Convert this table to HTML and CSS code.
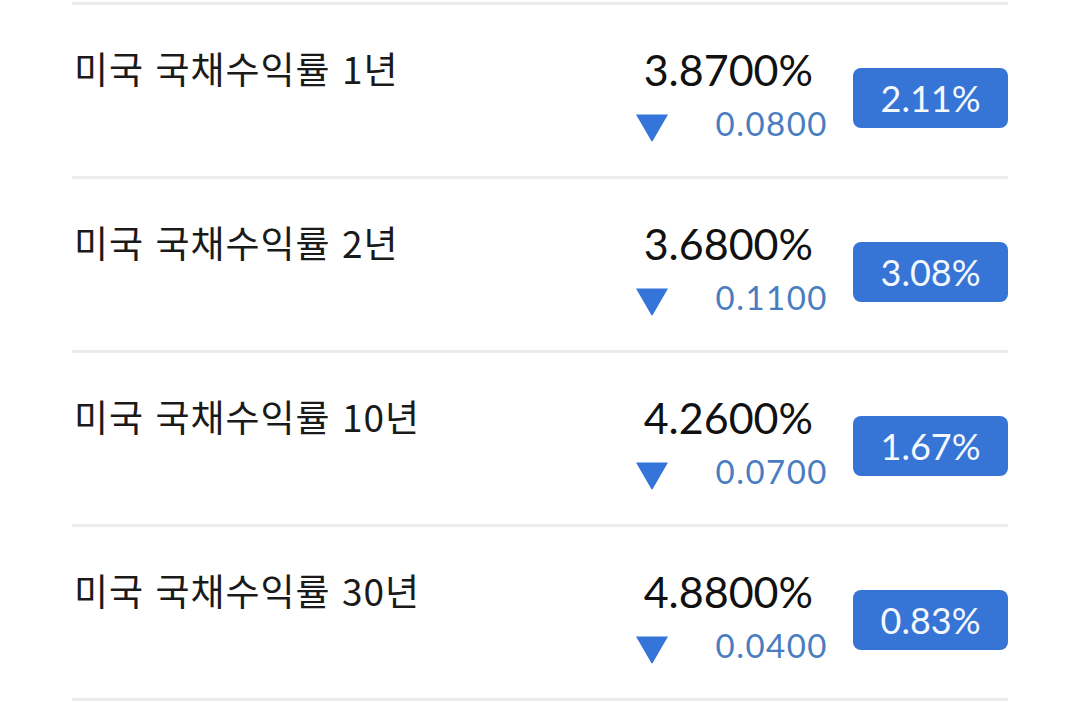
FILE: index.html
```html
<!DOCTYPE html>
<html lang="ko">
<head>
<meta charset="utf-8">
<title>미국 국채수익률</title>
<link rel="stylesheet" href="styles.css">
</head>
<body>
<ul class="list">
  <li class="row">
    <div class="label">미국 국채수익률 1년</div>
    <div class="right">
      <div class="quote">
        <div class="price">3.8700%</div>
        <div class="change">
          <svg class="tri" viewBox="0 0 36 29" width="36" height="29"><path d="M2 1.5 H34 L18.8 27.8 Q18 29 17.2 27.8 Z" fill="#3574d8"/></svg>
          <span class="delta">0.0800</span>
        </div>
      </div>
      <div class="badge">2.11%</div>
    </div>
  </li>
  <li class="row">
    <div class="label">미국 국채수익률 2년</div>
    <div class="right">
      <div class="quote">
        <div class="price">3.6800%</div>
        <div class="change">
          <svg class="tri" viewBox="0 0 36 29" width="36" height="29"><path d="M2 1.5 H34 L18.8 27.8 Q18 29 17.2 27.8 Z" fill="#3574d8"/></svg>
          <span class="delta">0.1100</span>
        </div>
      </div>
      <div class="badge">3.08%</div>
    </div>
  </li>
  <li class="row">
    <div class="label">미국 국채수익률 10년</div>
    <div class="right">
      <div class="quote">
        <div class="price">4.2600%</div>
        <div class="change">
          <svg class="tri" viewBox="0 0 36 29" width="36" height="29"><path d="M2 1.5 H34 L18.8 27.8 Q18 29 17.2 27.8 Z" fill="#3574d8"/></svg>
          <span class="delta">0.0700</span>
        </div>
      </div>
      <div class="badge">1.67%</div>
    </div>
  </li>
  <li class="row">
    <div class="label">미국 국채수익률 30년</div>
    <div class="right">
      <div class="quote">
        <div class="price">4.8800%</div>
        <div class="change">
          <svg class="tri" viewBox="0 0 36 29" width="36" height="29"><path d="M2 1.5 H34 L18.8 27.8 Q18 29 17.2 27.8 Z" fill="#3574d8"/></svg>
          <span class="delta">0.0400</span>
        </div>
      </div>
      <div class="badge">0.83%</div>
    </div>
  </li>
</ul>
</body>
</html>
```

FILE: styles.css
```css
html, body {
  margin: 0;
  padding: 0;
  background: #ffffff;
}

.list {
  list-style: none;
  margin: 2px 0 0 72px;
  padding: 0;
  width: 936px;
  border-bottom: 3px solid #ebebeb;
}

.row {
  display: flex;
  justify-content: space-between;
  align-items: flex-start;
  height: 171px;
  border-top: 3px solid #ebebeb;
}

.label {
  margin-top: 36px;
  padding-left: 2px;
  font-family: "Noto Sans CJK KR", "Noto Sans", sans-serif;
  font-size: 37px;
  line-height: 54px;
  letter-spacing: 1px;
  color: #1a1a1a;
}

.right {
  display: flex;
  align-items: flex-start;
  gap: 25px;
}

.quote {
  width: 194px;
  margin-top: 39px;
  font-family: Lato, "Liberation Sans", sans-serif;
}

.price {
  font-size: 43px;
  line-height: 51px;
  color: #111111;
  text-align: right;
  padding-right: 15px;
}

.change {
  display: flex;
  justify-content: space-between;
  align-items: flex-start;
  margin-top: 9px;
}

.tri {
  display: block;
  margin-top: 9px;
}

.delta {
  font-size: 33px;
  line-height: 38px;
  letter-spacing: 1.5px;
  color: #4a7dc0;
}

.badge {
  margin-top: 63px;
  width: 155px;
  height: 60px;
  border-radius: 8px;
  background: #3674d6;
  color: #f4f8ff;
  font-family: Lato, "Liberation Sans", sans-serif;
  font-size: 36px;
  line-height: 60px;
  text-align: center;
}
```
